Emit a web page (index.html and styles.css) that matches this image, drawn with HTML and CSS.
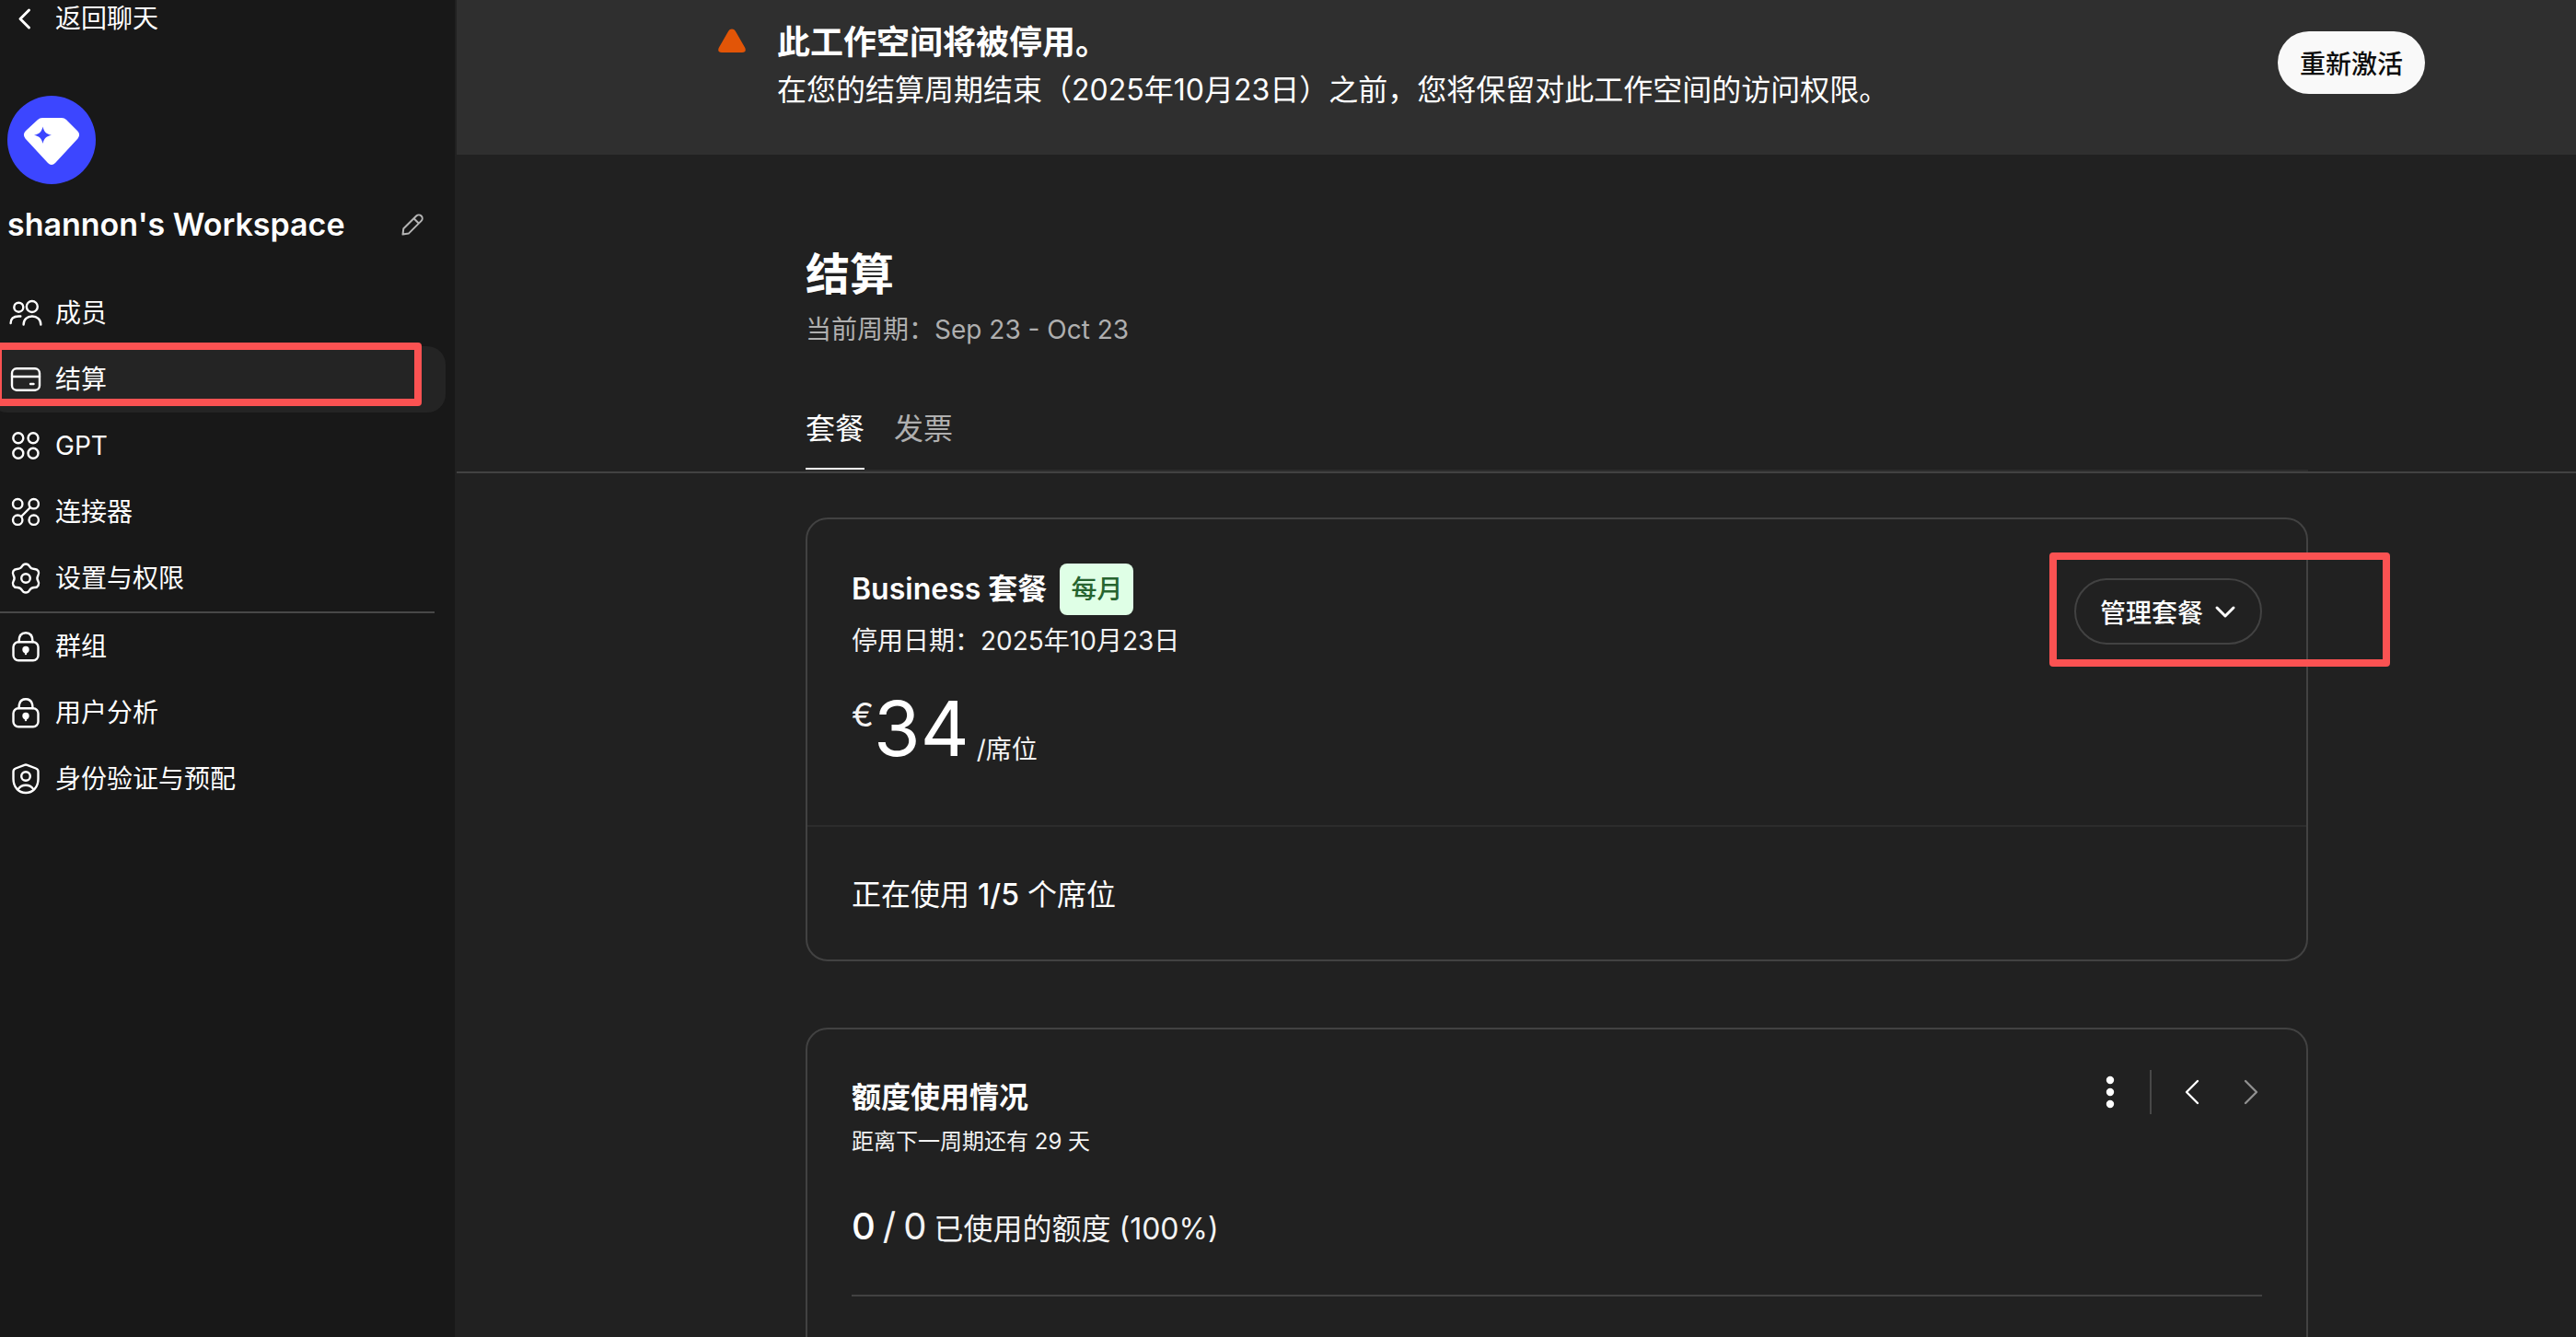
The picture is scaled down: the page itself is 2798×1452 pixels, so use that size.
FILE: index.html
```html
<!DOCTYPE html>
<html lang="zh-CN">
<head>
  <meta charset="UTF-8">
  <meta name="viewport" content="width=device-width, initial-scale=1.0">
  <title>结算</title>
  <link rel="stylesheet" href="styles.css">
</head>
<body>
  <div class="app">

    <aside class="sidebar">
      <a href="#" class="side-link back-link">
        <svg class="icon" viewBox="0 0 40 40"><path d="M23.500 11l-9.500 9.500 9.500 9.500"/></svg>
        返回聊天
      </a>

      <svg class="avatar" viewBox="0 0 96 96">
        <circle cx="48" cy="48" r="48" fill="#3c46ff"/>
        <path d="M38 24H59q3 0 5 2L76 38q4 4 .5 8.500L52 73q-4 4-8 0L19.500 46.500Q16 42 20 38L33 26q2-2 5-2z" fill="#fff"/>
        <path d="M38.500 33.500c1.200 5.500 3.500 8 9.500 9.200-6 1.200-8.300 3.700-9.500 9.300-1.200-5.600-3.500-8.100-9.500-9.300 6-1.200 8.300-3.700 9.500-9.200z" fill="#3c46ff"/>
      </svg>

      <div class="workspace">
        <h2 class="workspace-name">shannon's Workspace</h2>
        <button type="button" class="edit-btn" aria-label="编辑">
          <svg viewBox="0 0 24 24"><path d="M1.500 22.500l.8-6.300L16.200 2.500a3.800 3.800 0 0 1 5.400 5.400L7.800 21.600zM13.500 5.200l5.300 5.300"/></svg>
        </button>
      </div>

      <nav class="nav">
        <a href="#" class="side-link">
          <svg class="icon" viewBox="0 0 40 40"><circle cx="12.300" cy="13.700" r="5"/><circle cx="26.800" cy="13" r="6"/><path d="M3.600 31c0-5 3.500-7.500 8.700-7.500h2M17.600 32.500c0-5.500 4-9 9.300-9s9.400 3.500 9.400 9"/></svg>
          成员
        </a>
        <a href="#" class="side-link active">
          <svg class="icon" viewBox="0 0 40 40"><rect x="5" y="8.300" width="30" height="23.400" rx="5"/><path d="M5 17h30M25 25h3.500"/></svg>
          结算
          <span class="highlight highlight-nav"></span>
        </a>
        <a href="#" class="side-link">
          <svg class="icon" viewBox="0 0 40 40"><circle cx="11.800" cy="11.800" r="5.500"/><circle cx="28" cy="11.800" r="5.500"/><circle cx="11.800" cy="28.200" r="5.500"/><circle cx="28" cy="28.200" r="5.500"/></svg>
          GPT
        </a>
        <a href="#" class="side-link">
          <svg class="icon" viewBox="0 0 40 40"><circle cx="11.200" cy="11.200" r="5.200"/><circle cx="28.700" cy="11.200" r="5.200"/><circle cx="11.200" cy="28.700" r="5.200"/><circle cx="28.700" cy="28.700" r="5.200"/><path d="M25 15L15 25"/></svg>
          连接器
        </a>
        <a href="#" class="side-link">
          <svg class="icon" viewBox="-20 -20 40 40"><path d="M-3.900-13.200A4.400 4.400 0 0 1 3.900-13.200Q5.700-9.900 9.500-10A4.400 4.400 0 0 1 13.400-3.200Q11.400 0 13.400 3.200A4.400 4.400 0 0 1 9.500 10Q5.700 9.900 3.900 13.200A4.400 4.400 0 0 1-3.900 13.200Q-5.700 9.900-9.500 10A4.400 4.400 0 0 1-13.400 3.200Q-11.400 0-13.400-3.200A4.400 4.400 0 0 1-9.500-10Q-5.700-9.900-3.900-13.200z"/><circle r="4.800"/></svg>
          设置与权限
        </a>
        <hr class="nav-divider">
        <a href="#" class="side-link">
          <svg class="icon" viewBox="0 0 40 40"><rect x="6.500" y="15.200" width="27" height="20" rx="5.500"/><path d="M12.500 15c0-6 2.500-9.700 7.500-9.700s7.500 3.700 7.500 9.700M20 24v4"/><circle class="solid" cx="20" cy="23.500" r="2.500"/></svg>
          群组
        </a>
        <a href="#" class="side-link">
          <svg class="icon" viewBox="0 0 40 40"><rect x="6.500" y="15.200" width="27" height="20" rx="5.500"/><path d="M12.500 15c0-6 2.500-9.700 7.500-9.700s7.500 3.700 7.500 9.700M20 24v4"/><circle class="solid" cx="20" cy="23.500" r="2.500"/></svg>
          用户分析
        </a>
        <a href="#" class="side-link">
          <svg class="icon" viewBox="0 0 40 40"><path d="M18.500 4.800q1.500-.6 3 0l9.500 3.700q2.500 1 2.500 3.500V20c0 9-6 15-13.500 15S6.500 29 6.500 20v-8q0-2.500 2.500-3.500z"/><circle cx="20" cy="17" r="4.800"/><path d="M11.500 31.500c2-3.300 5-4.700 8.500-4.700s6.500 1.400 8.500 4.700"/></svg>
          身份验证与预配
        </a>
      </nav>
    </aside>

    <main class="main">
      <section class="banner">
        <svg class="warning-icon" viewBox="0 0 30 28"><path d="M15 1.500q2.500 0 3.800 2.300L29.300 22q1.800 5-3.300 5H4q-5.100 0-3.300-5L11.200 3.800Q12.500 1.500 15 1.500z"/></svg>
        <div class="banner-text">
          <h3 class="banner-title">此工作空间将被停用。</h3>
          <p class="banner-desc">在您的结算周期结束（2025年10月23日）之前，您将保留对此工作空间的访问权限。</p>
        </div>
        <button type="button" class="btn-primary">重新激活</button>
      </section>

      <header class="page-header">
        <h1 class="page-title">结算</h1>
        <p class="period">当前周期：Sep 23 - Oct 23</p>
        <div class="tabs">
          <button type="button" class="tab active">套餐</button>
          <button type="button" class="tab">发票</button>
        </div>
      </header>

      <div class="content">
        <section class="card">
          <div class="plan">
            <div class="plan-head">
              <div>
                <div class="plan-name">
                  <h2 class="card-title">Business 套餐</h2>
                  <span class="badge">每月</span>
                </div>
                <p class="plan-date">停用日期：2025年10月23日</p>
              </div>
              <div class="manage">
                <button type="button" class="btn-outline">
                  管理套餐
                  <svg viewBox="0 0 24 24"><path d="M3 8l9 9 9-9"/></svg>
                </button>
                <span class="highlight highlight-manage"></span>
              </div>
            </div>
            <div class="price">
              <span class="currency">€</span>
              <span class="amount">34</span>
              <span class="unit">/席位</span>
            </div>
          </div>
          <p class="seats">正在使用 <strong>1/5</strong> 个席位</p>
        </section>

        <section class="card usage">
          <div class="usage-head">
            <div>
              <h2 class="card-title">额度使用情况</h2>
              <p class="usage-sub">距离下一周期还有 29 天</p>
            </div>
            <div class="usage-actions">
              <button type="button" class="icon-btn" aria-label="更多">
                <svg viewBox="0 0 40 40"><circle class="solid" cx="21" cy="7" r="3"/><circle class="solid" cx="21" cy="20" r="3"/><circle class="solid" cx="21" cy="33" r="3"/></svg>
              </button>
              <span class="separator"></span>
              <button type="button" class="icon-btn" aria-label="上一周期">
                <svg viewBox="0 0 40 40"><path d="M26 8L14 20l12 12"/></svg>
              </button>
              <button type="button" class="icon-btn" aria-label="下一周期" disabled>
                <svg viewBox="0 0 40 40"><path d="M14 8l12 12-12 12"/></svg>
              </button>
            </div>
          </div>
          <p class="credits">
            <strong class="credits-num used">0</strong>
            <span class="credits-num">/</span>
            <span class="credits-num">0</span>
            <span>已使用的额度 (100%)</span>
          </p>
          <hr class="usage-divider">
        </section>
      </div>
    </main>

  </div>
</body>
</html>
```
FILE: styles.css
```css
* {
  box-sizing: border-box;
}

body {
  margin: 0;
  background-color: #212121;
  color: #fff;
  font-family: Inter, "Noto Sans CJK SC", sans-serif;
  font-size: 28px;
  line-height: 40px;
}

h1, h2, h3, p {
  margin: 0;
}

button {
  font-family: inherit;
  color: inherit;
  background: none;
  border: none;
  padding: 0;
  cursor: pointer;
}

svg {
  display: block;
  flex: none;
  fill: none;
  stroke: currentColor;
  stroke-width: 2.4;
  stroke-linecap: round;
  stroke-linejoin: round;
}

.solid {
  fill: currentColor;
}

.app {
  display: flex;
  height: 100vh;
  overflow: hidden;
}

/* sidebar */
.sidebar {
  flex: none;
  width: 496px;
  background-color: #181818;
  border-right: 2px solid #212121;
}

.side-link {
  position: relative;
  display: flex;
  align-items: center;
  gap: 12px;
  height: 72px;
  margin: 0 10px 0 -12px;
  padding-left: 20px;
  border-radius: 20px;
  color: #fff;
  text-decoration: none;
}

.side-link.active {
  background-color: #242424;
}

.back-link {
  height: 40px;
}

.back-link .icon {
  stroke-width: 3;
}

.icon {
  width: 40px;
  height: 40px;
}

.avatar {
  width: 96px;
  height: 96px;
  margin: 64px 0 0 8px;
  stroke: none;
}

.workspace {
  display: flex;
  align-items: center;
  justify-content: space-between;
  padding: 20px 34px 36px 8px;
}

.workspace-name {
  font-size: 34px;
  line-height: 48px;
  font-weight: 600;
}

.edit-btn svg {
  width: 24px;
  height: 24px;
  color: #b4b4b4;
  stroke-width: 2;
}

.nav-divider {
  height: 2px;
  margin: 0 22px 0 0;
  border: none;
  background-color: #484848;
}

/* red marker boxes */
.highlight {
  position: absolute;
  border: 8px solid #fb5252;
  border-radius: 4px;
  pointer-events: none;
}

.highlight-nav {
  top: -4px;
  left: 6px;
  right: 26px;
  height: 69px;
}

.highlight-manage {
  top: -28px;
  bottom: -24px;
  left: -27px;
  right: -139px;
}

/* banner */
.main {
  flex: 1;
  min-width: 0;
}

.banner {
  display: flex;
  align-items: flex-start;
  height: 168px;
  padding: 18px 164px 0 284px;
  background-color: #2f2f2f;
}

.warning-icon {
  width: 30px;
  height: 28px;
  margin: 12px 34px 0 0;
  fill: #e25507;
  stroke: none;
}

.banner-text {
  flex: 1;
}

.banner-title {
  font-size: 36px;
  line-height: 56px;
  font-weight: 600;
}

.banner-desc {
  font-size: 32px;
  line-height: 48px;
}

.btn-primary {
  height: 68px;
  margin-top: 16px;
  padding: 0 24px;
  border-radius: 34px;
  background-color: #f9f9f9;
  color: #0d0d0d;
  font-size: 28px;
  font-weight: 500;
}

/* page header */
.page-header {
  padding: 98px 291px 0 379px;
  border-bottom: 2px solid #424242;
}

.page-title {
  font-size: 48px;
  line-height: 64px;
  font-weight: 600;
}

.period {
  margin-top: 8px;
  color: #afafaf;
}

.tabs {
  display: flex;
  gap: 32px;
  margin-top: 68px;
  border-bottom: 2px solid #2c2c2c;
}

.tab {
  padding-bottom: 22px;
  border-bottom: 2px solid transparent;
  color: #afafaf;
  font-size: 32px;
  line-height: 40px;
}

.tab.active {
  color: #fff;
  border-bottom-color: #f3f3f3;
}

/* cards */
.content {
  padding: 48px 291px 48px 379px;
}

.card {
  border: 2px solid #424242;
  border-radius: 24px;
}

.card + .card {
  margin-top: 72px;
}

.card-title {
  font-size: 32px;
  line-height: 48px;
  font-weight: 600;
}

.plan {
  padding: 48px 48px 56px;
  border-bottom: 2px solid #2c2c2c;
}

.plan-head {
  display: flex;
  align-items: center;
  justify-content: space-between;
}

.plan-name {
  display: flex;
  align-items: center;
  gap: 14px;
}

.badge {
  padding: 8px 12px;
  border-radius: 8px;
  background-color: #dfffe6;
  color: #26632f;
  font-weight: 500;
}

.plan-date {
  margin-top: 8px;
  color: #f3f3f3;
}

.manage {
  position: relative;
}

.btn-outline {
  display: flex;
  align-items: center;
  gap: 12px;
  height: 72px;
  padding: 0 26px;
  border: 2px solid #424242;
  border-radius: 36px;
  font-size: 28px;
  font-weight: 500;
}

.btn-outline svg {
  width: 24px;
  height: 24px;
  stroke-width: 3;
}

.price {
  display: flex;
  align-items: flex-start;
  height: 96px;
  margin-top: 28px;
}

.currency {
  font-size: 36px;
  line-height: 64px;
  color: #f3f3f3;
}

.amount {
  font-size: 82px;
  line-height: 96px;
}

.unit {
  align-self: flex-end;
  margin-left: 8px;
  padding-bottom: 6px;
  color: #f3f3f3;
}

.seats {
  padding: 50px 48px 46px;
  font-size: 32px;
  line-height: 48px;
}

.seats strong {
  font-weight: 500;
}

.usage {
  min-height: 480px;
  padding: 50px 48px 48px;
}

.usage-head {
  display: flex;
  align-items: flex-start;
  justify-content: space-between;
}

.usage-sub {
  font-size: 24px;
  line-height: 48px;
  color: #f3f3f3;
}

.usage-actions {
  display: flex;
  align-items: center;
  gap: 24px;
  height: 36px;
  margin-right: -8px;
}

.icon-btn svg {
  width: 40px;
  height: 40px;
}

.icon-btn:disabled {
  color: #8f8f8f;
}

.separator {
  width: 2px;
  height: 48px;
  background-color: #484848;
}

.credits {
  display: flex;
  align-items: baseline;
  gap: 8px;
  height: 48px;
  margin-top: 44px;
  font-size: 32px;
  line-height: 48px;
  color: #f3f3f3;
}

.credits-num {
  font-size: 40px;
}

.used {
  font-weight: 500;
  color: #fff;
}

.usage-divider {
  height: 2px;
  margin: 50px 0 0;
  border: none;
  background-color: #424242;
}
```
